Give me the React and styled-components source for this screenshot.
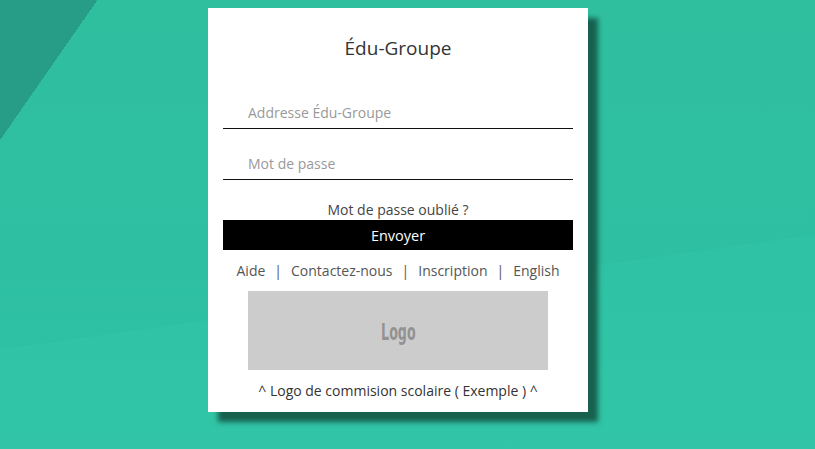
import styled, { createGlobalStyle } from "styled-components";

const GlobalStyle = createGlobalStyle`
  html, body {
    margin: 0;
    padding: 0;
  }
  body {
    min-height: 449px;
    font-family: "Open Sans", "Noto Sans", sans-serif;
    background:
      linear-gradient(124.8deg, #279c86 80px, transparent 80px),
      linear-gradient(172deg, rgba(255,255,255,0) 0 62%, rgba(60,215,180,0.12) 62% 100%),
      linear-gradient(180deg, #2fbf9f 0%, #2ebfa2 60%, #30c3a5 100%);
  }
`;

const Page = styled.div`
  display: flex;
  justify-content: center;
  padding-top: 8px;
  padding-right: 19px;
`;

const Card = styled.div`
  width: 380px;
  box-sizing: border-box;
  background: #fff;
  padding: 27px 15px 11px;
  display: flex;
  flex-direction: column;
  align-items: stretch;
  box-shadow: 10px 10px 5px rgba(22, 88, 72, 0.92);
`;

const Title = styled.h1`
  margin: 0;
  font-size: 19px;
  line-height: 26px;
  font-weight: 400;
  color: #333;
  text-align: center;
`;

const Field = styled.input`
  display: block;
  box-sizing: border-box;
  width: 100%;
  height: 34px;
  margin-top: ${(p) => p.$gap}px;
  padding: 2px 25px 0;
  border: none;
  border-bottom: 1.5px solid #111;
  outline: none;
  font-family: "Open Sans", sans-serif;
  font-size: 14px;
  color: #333;
  background: transparent;

  &::placeholder {
    color: #999;
  }
`;

const Forgot = styled.div`
  margin-top: 20px;
  font-size: 14px;
  line-height: 20px;
  color: #444;
  text-align: center;
`;

const SubmitButton = styled.button`
  height: 30px;
  border: none;
  background: #000;
  color: #fff;
  font-family: "Open Sans", sans-serif;
  font-size: 14.5px;
  cursor: pointer;
`;

const Links = styled.div`
  margin-top: 10px;
  display: flex;
  justify-content: center;
  gap: 9px;
  font-size: 14px;
  line-height: 22px;
  color: #555;
`;

const Sep = styled.span`
  color: #555;
`;

const LogoBox = styled.div`
  align-self: center;
  margin-top: 9px;
  width: 300px;
  height: 79px;
  background: #ccc;
  display: flex;
  align-items: center;
  justify-content: center;
`;

const LogoText = styled.span`
  display: inline-block;
  font-family: "DejaVu Sans", sans-serif;
  font-weight: 700;
  font-size: 23px;
  color: #929292;
  transform: scaleX(0.55);
  margin-top: 2px;
`;

const Caption = styled.div`
  margin-top: 11px;
  font-size: 14px;
  line-height: 20px;
  color: #333;
  text-align: center;
`;

const links = ["Aide", "Contactez-nous", "Inscription", "English"];

export default function App() {
  return (
    <>
      <GlobalStyle />
      <Page>
        <Card>
          <Title>Édu-Groupe</Title>
          <Field $gap={34} placeholder="Addresse Édu-Groupe" />
          <Field $gap={17} type="password" placeholder="Mot de passe" />
          <Forgot>Mot de passe oublié ?</Forgot>
          <SubmitButton>Envoyer</SubmitButton>
          <Links>
            {links.map((l, i) => (
              <span key={l} style={{ display: "contents" }}>
                {i > 0 && <Sep>|</Sep>}
                <span>{l}</span>
              </span>
            ))}
          </Links>
          <LogoBox>
            <LogoText>Logo</LogoText>
          </LogoBox>
          <Caption>^ Logo de commision scolaire ( Exemple ) ^</Caption>
        </Card>
      </Page>
    </>
  );
}
